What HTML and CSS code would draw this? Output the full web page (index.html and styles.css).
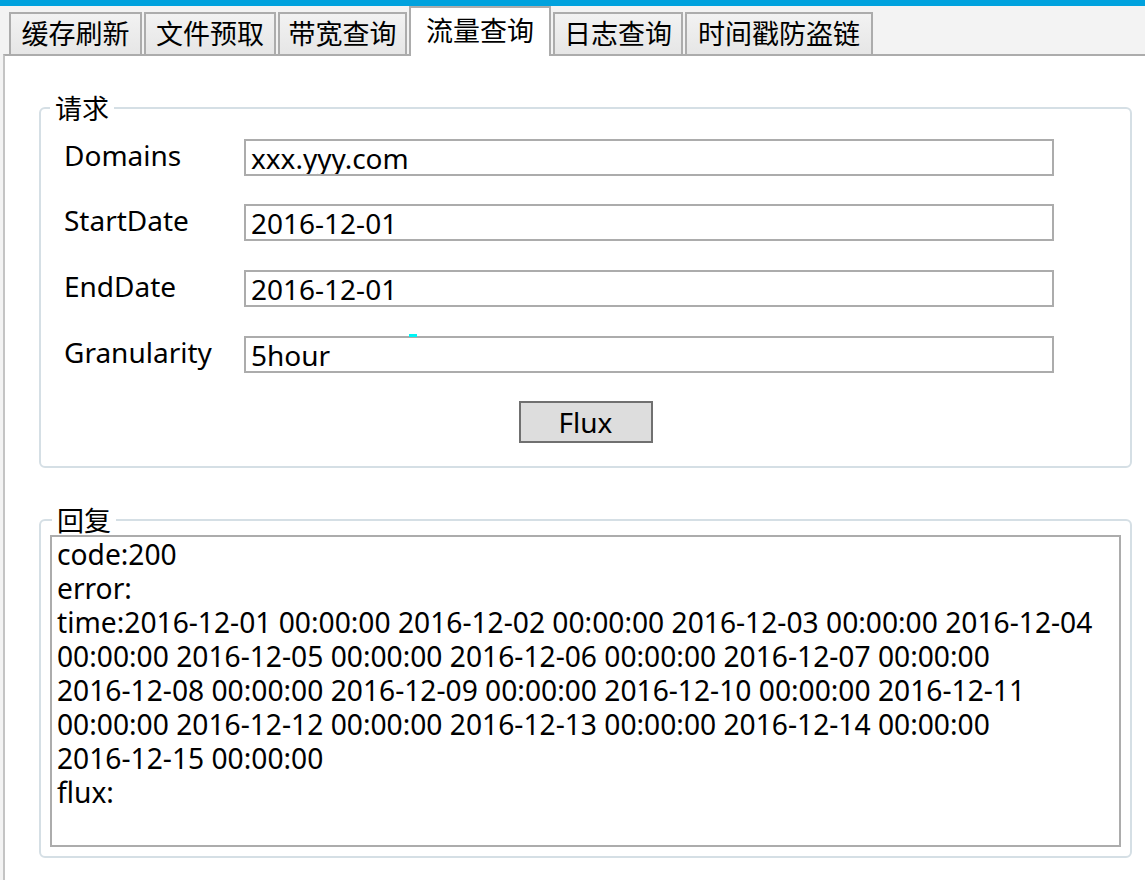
FILE: index.html
```html
<!DOCTYPE html>
<html lang="zh-CN">
<head>
    <meta charset="UTF-8">
    <title>流量查询</title>
    <link rel="stylesheet" href="styles.css">
</head>
<body>
    <div class="titlebar"></div>
    <div class="tabs">
        <div class="tab tab-cache">缓存刷新</div>
        <div class="tab tab-prefetch">文件预取</div>
        <div class="tab tab-bandwidth">带宽查询</div>
        <div class="tab tab-flux active">流量查询</div>
        <div class="tab tab-log">日志查询</div>
        <div class="tab tab-antileech">时间戳防盗链</div>
    </div>
    <div class="panel">
        <fieldset class="group request">
            <legend>请求</legend>
            <div class="form-row">
                <label for="domains">Domains</label>
                <input type="text" id="domains" value="xxx.yyy.com">
            </div>
            <div class="form-row">
                <label for="startDate">StartDate</label>
                <input type="text" id="startDate" value="2016-12-01">
            </div>
            <div class="form-row">
                <label for="endDate">EndDate</label>
                <input type="text" id="endDate" value="2016-12-01">
            </div>
            <div class="form-row">
                <label for="granularity">Granularity</label>
                <input type="text" id="granularity" value="5hour">
                <span class="caret-mark"></span>
            </div>
            <div class="actions">
                <button class="btn-flux">Flux</button>
            </div>
        </fieldset>

        <fieldset class="group reply">
            <legend>回复</legend>
            <div class="output">
                <div>code:200</div>
                <div>error:</div>
                <div>time:2016-12-01 00:00:00 2016-12-02 00:00:00 2016-12-03 00:00:00 2016-12-04</div>
                <div>00:00:00 2016-12-05 00:00:00 2016-12-06 00:00:00 2016-12-07 00:00:00</div>
                <div>2016-12-08 00:00:00 2016-12-09 00:00:00 2016-12-10 00:00:00 2016-12-11</div>
                <div>00:00:00 2016-12-12 00:00:00 2016-12-13 00:00:00 2016-12-14 00:00:00</div>
                <div>2016-12-15 00:00:00</div>
                <div>flux:</div>
            </div>
        </fieldset>
    </div>
</body>
</html>
```

FILE: styles.css
```css
* {
    box-sizing: border-box;
}
html, body {
    margin: 0;
    padding: 0;
    height: 100%;
    overflow: hidden;
}
body {
    background: #f3f3f3;
    color: #000;
    font-family: "Noto Sans", "Noto Sans CJK SC", sans-serif;
    font-size: 28px;
}
.titlebar {
    height: 6px;
    background: #00a2de;
}

/* tab strip */
.tabs {
    display: flex;
    align-items: flex-end;
    height: 48px;
    padding-left: 9px;
}
.tab {
    height: 42px;
    margin-right: 2px;
    border: 2px solid #acacac;
    border-bottom: none;
    background: linear-gradient(#f2f2f2, #e6e6e6);
    font-family: "Noto Sans CJK SC", sans-serif;
    font-size: 27px;
    line-height: 37px;
    text-align: center;
}
.tab-cache { width: 133px; }
.tab-prefetch { width: 132px; }
.tab-bandwidth { width: 129px; }
.tab-flux { width: 142px; }
.tab-log { width: 130px; }
.tab-antileech { width: 188px; }
.tab.active {
    position: relative;
    z-index: 1;
    height: 50px;
    margin-bottom: -2px;
    background: #fff;
    line-height: 44px;
}

/* page */
.panel {
    height: calc(100% - 54px);
    margin-left: 3px;
    border-left: 2px solid #c4c4c4;
    border-top: 2px solid #acacac;
    background: #fff;
    padding-top: 37px;
}
.group {
    width: 1093px;
    margin: 0 0 0 34px;
    padding: 0;
    border: 2px solid #d5dfe5;
    border-radius: 6px;
}
.group legend {
    margin-left: 9px;
    padding: 0 5px;
    font-family: "Noto Sans CJK SC", sans-serif;
    font-size: 27px;
    line-height: 30px;
}
.request {
    padding: 16px 0 23px;
}
.form-row {
    position: relative;
    display: flex;
    align-items: center;
    height: 37px;
    margin-bottom: 29px;
}
.form-row:first-of-type {
    margin-bottom: 28px;
}
.form-row label {
    width: 203px;
    padding: 0 0 6px 23px;
}
.form-row input {
    width: 810px;
    height: 37px;
    padding: 0 0 0 5px;
    border: 2px solid #acacac;
    font-family: inherit;
    font-size: 28px;
    color: #000;
    outline: none;
}
.caret-mark {
    position: absolute;
    left: 368px;
    top: -2px;
    width: 8px;
    height: 3px;
    background: #00f5f5;
}
.actions {
    text-align: center;
    margin-top: -1px;
}
.btn-flux {
    width: 134px;
    height: 42px;
    border: 2px solid #707070;
    background: #dddddd;
    font-family: inherit;
    font-size: 28px;
    color: #000;
    padding: 0;
}
.reply {
    margin-top: 37px;
    padding: 0 9px 9px;
}
.reply legend {
    margin-left: 2px;
}
.output {
    height: 312px;
    border: 2px solid #acacac;
    padding: 0 0 0 5px;
    font-size: 28.2px;
    line-height: 34px;
    white-space: nowrap;
}
```
